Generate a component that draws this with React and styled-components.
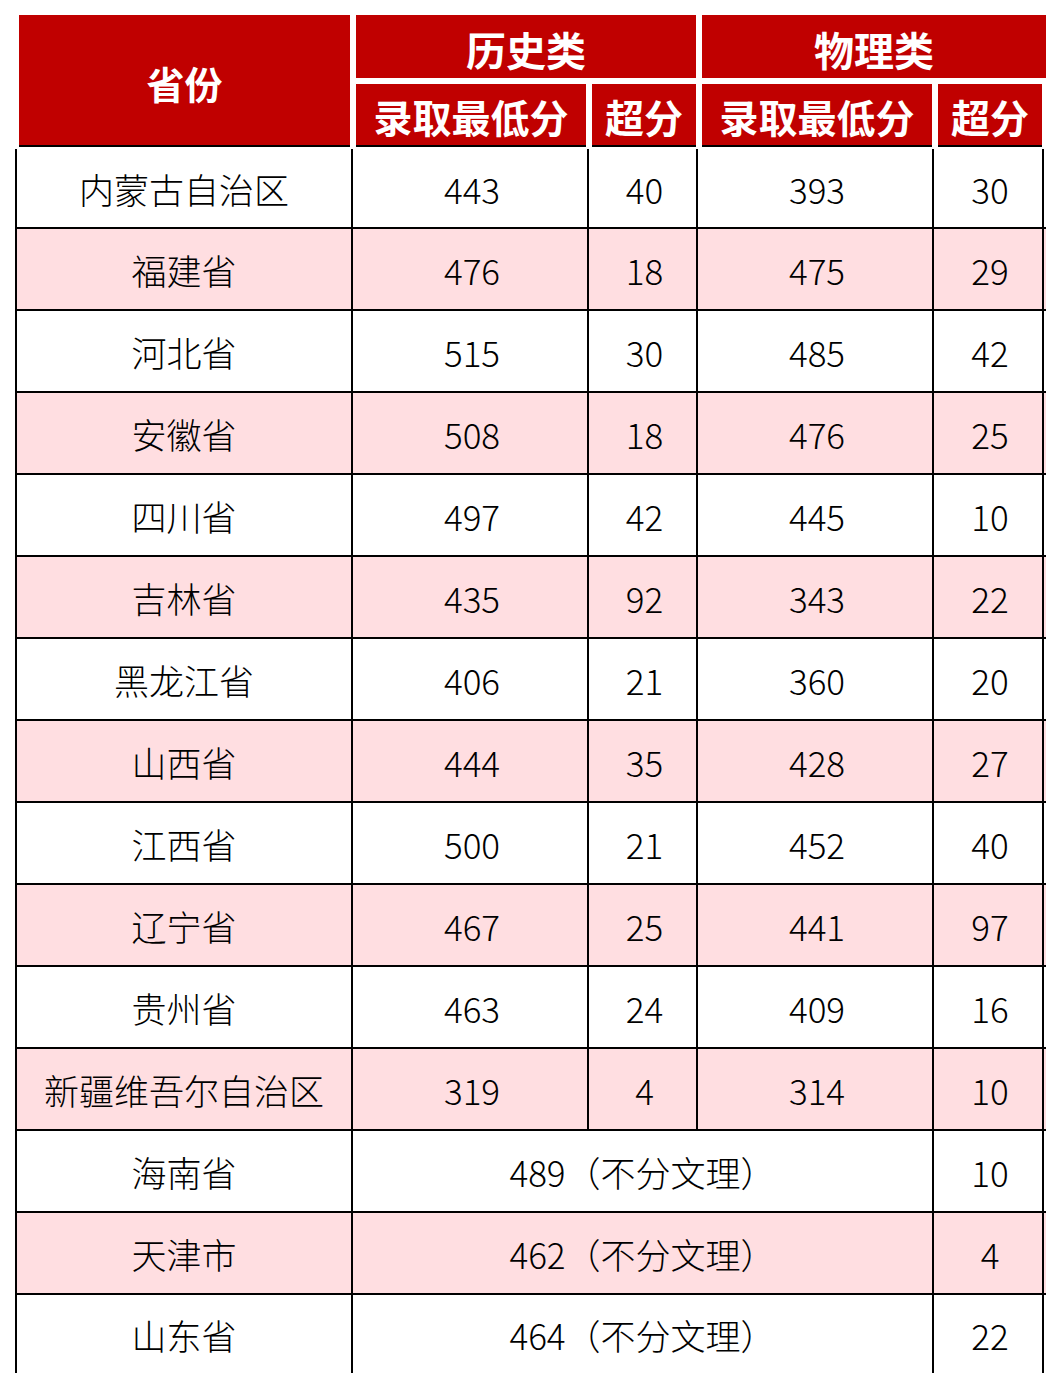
import React from "react";
import styled, { createGlobalStyle } from "styled-components";

const Global = createGlobalStyle`
  html, body { margin: 0; padding: 0; background: #fff; }
  body { font-family: "Noto Sans CJK SC", sans-serif; }
`;

const Page = styled.div`
  padding: 15px 0 0 15px;
  width: 1060px;
  height: 1388px;
  box-sizing: border-box;
  overflow: hidden;
`;

const Header = styled.div`
  display: grid;
  grid-template-columns: 331px 230px 104px 230px 104px;
  grid-template-rows: 63px 63px;
  column-gap: 6px;
  row-gap: 6px;
  margin-left: 4px;
  width: 1026px;
`;

const HeadCell = styled.div`
  background: #c00000;
  color: #fff;
  font-family: "Noto Sans CJK SC", sans-serif;
  font-weight: 700;
  font-size: ${(p) => p.$size || 39}px;
  line-height: 1;
  display: flex;
  align-items: center;
  justify-content: center;
  padding-top: ${(p) => p.$pt || 4}px;
  box-sizing: border-box;
  grid-column: ${(p) => p.$col || "auto"};
  grid-row: ${(p) => p.$row || "auto"};
  margin-right: ${(p) => p.$mr || 0}px;
  border-bottom: ${(p) => (p.$line ? "2px solid #000" : "none")};
`;

const Body = styled.div`
  margin-top: 2px;
  border-left: 2px solid #000;
  width: 1029px;
`;

const Row = styled.div`
  display: grid;
  grid-template-columns: 336px 236px 109px 236px 110px;
  height: ${(p) => p.$h}px;
  background: ${(p) => (p.$pink ? "#ffdee1" : "#fff")};
  box-sizing: border-box;
  border-bottom: ${(p) => (p.$last ? "none" : "2px solid #000")};
`;

const Cell = styled.div`
  grid-column: span ${(p) => p.$span || 1};
  border-right: 2px solid #000;
  display: flex;
  align-items: center;
  justify-content: center;
  font-family: "Noto Sans CJK SC", sans-serif;
  font-weight: 300;
  font-size: 35px;
  line-height: 1;
  color: #000;
  padding: 0 0 0 ${(p) => p.$pl || 0}px;
  box-sizing: border-box;
  white-space: nowrap;
`;

const rows = [
  ["内蒙古自治区", "443", "40", "393", "30"],
  ["福建省", "476", "18", "475", "29"],
  ["河北省", "515", "30", "485", "42"],
  ["安徽省", "508", "18", "476", "25"],
  ["四川省", "497", "42", "445", "10"],
  ["吉林省", "435", "92", "343", "22"],
  ["黑龙江省", "406", "21", "360", "20"],
  ["山西省", "444", "35", "428", "27"],
  ["江西省", "500", "21", "452", "40"],
  ["辽宁省", "467", "25", "441", "97"],
  ["贵州省", "463", "24", "409", "16"],
  ["新疆维吾尔自治区", "319", "4", "314", "10"],
  ["海南省", "489（不分文理）", "10"],
  ["天津市", "462（不分文理）", "4"],
  ["山东省", "464（不分文理）", "22"],
];

export default function App() {
  return (
    <Page>
      <Global />
      <Header>
        <HeadCell $col="1" $row="1 / span 2" $line $size={38} $pt={6}>
          省份
        </HeadCell>
        <HeadCell $col="2 / span 2" $row="1" $size={40}>历史类</HeadCell>
        <HeadCell $col="4 / span 2" $row="1" $size={40} $mr={-4}>
          物理类
        </HeadCell>
        <HeadCell $col="2" $row="2" $line>录取最低分</HeadCell>
        <HeadCell $col="3" $row="2" $line>超分</HeadCell>
        <HeadCell $col="4" $row="2" $line>录取最低分</HeadCell>
        <HeadCell $col="5" $row="2" $line>超分</HeadCell>
      </Header>
      <Body>
        {rows.map((r, i) => {
          const last = i === rows.length - 1;
          const h = i === 0 ? 80 : last ? 78 : 82;
          return (
            <Row key={r[0]} $pink={i % 2 === 1} $last={last} $h={h}>
              {r.length === 5 ? (
                r.map((c, j) => (
                  <Cell key={j} $pl={j === 0 ? 0 : 4}>
                    {c}
                  </Cell>
                ))
              ) : (
                <>
                  <Cell>{r[0]}</Cell>
                  <Cell $span={3}>{r[1]}</Cell>
                  <Cell $pl={4}>{r[2]}</Cell>
                </>
              )}
            </Row>
          );
        })}
      </Body>
    </Page>
  );
}
